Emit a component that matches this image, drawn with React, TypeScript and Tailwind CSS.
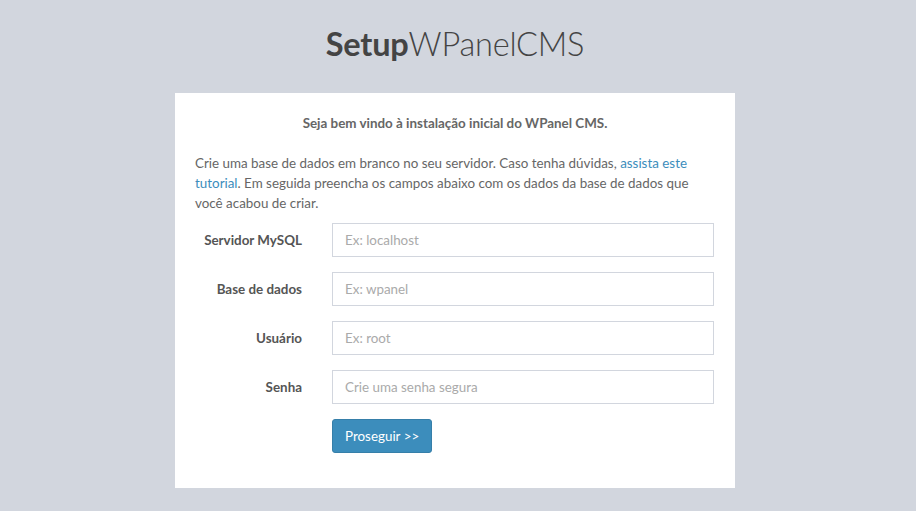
const fields = [
  { label: "Servidor MySQL", placeholder: "Ex: localhost", type: "text" },
  { label: "Base de dados", placeholder: "Ex: wpanel", type: "text" },
  { label: "Usuário", placeholder: "Ex: root", type: "text" },
  { label: "Senha", placeholder: "Crie uma senha segura", type: "password" },
];

export default function App() {
  return (
    <div className="min-h-screen bg-[#d2d6de] pl-[175px] font-['Lato',sans-serif] text-[13.4px] text-[#666]">
      <div className="w-[560px] pt-[23px]">
        {/* Logo */}
        <div className="mb-[28px] text-center text-[32.5px] leading-[42px] tracking-[-0.2px] text-[#444]">
          <span className="font-bold">Setup</span>
          <span className="font-light">WPanelCMS</span>
        </div>

        {/* Box */}
        <div className="bg-white px-[20px] pb-[35px] pt-[20px]">
          <p className="mb-[20px] text-center font-bold leading-[20px]">
            Seja bem vindo à instalação inicial do WPanel CMS.
          </p>
          <p className="mb-[10px] leading-[20px]">
            Crie uma base de dados em branco no seu servidor. Caso tenha dúvidas,{" "}
            <a href="#" className="text-[#3c8dbc]">assista este</a>{" "}
            <a href="#" className="text-[#3c8dbc]">tutorial</a>. Em seguida preencha os campos abaixo com os dados da
            base de dados que você acabou de criar.
          </p>

          <form className="-mx-[15px] flex flex-col gap-[15px]" onSubmit={(e) => e.preventDefault()}>
            {fields.map((f) => (
              <div key={f.label} className="flex items-center">
                <label className="w-[137px] shrink-0 pl-[15px] pr-[15px] text-right font-bold text-[#555]">{f.label}</label>
                <div className="flex-1 pl-[15px] pr-[16px]">
                  <input
                    type={f.type}
                    placeholder={f.placeholder}
                    className="h-[34px] w-full border border-[#d2d6de] bg-white px-[12px] text-[13.4px] text-[#555] outline-none placeholder:text-[#aaa]"
                  />
                </div>
              </div>
            ))}
            <div className="flex">
              <div className="w-[137px] shrink-0" />
              <div className="pl-[15px]">
                <button
                  type="submit"
                  className="h-[34px] rounded-[3px] border border-[#367fa9] bg-[#3c8dbc] px-[12px] text-[13.4px] text-white"
                >
                  Proseguir &gt;&gt;
                </button>
              </div>
            </div>
          </form>
        </div>
      </div>
    </div>
  );
}
